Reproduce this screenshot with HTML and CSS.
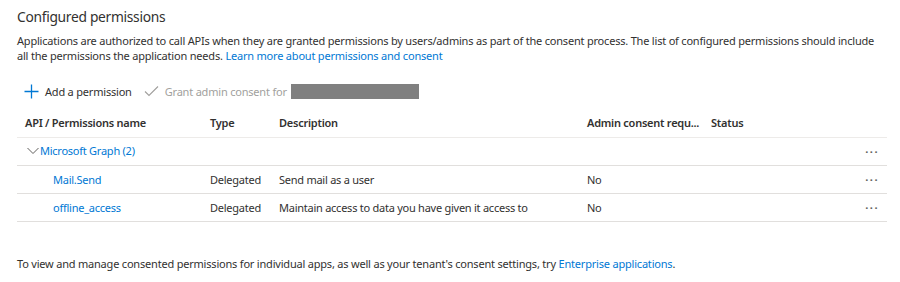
FILE: index.html
```html
<!DOCTYPE html>
<html lang="en">
<head>
    <meta charset="UTF-8">
    <title>Configured permissions</title>
    <link rel="stylesheet" href="styles.css">
</head>
<body>
    <div class="panel">
        <h2 class="title">Configured permissions</h2>
        <p class="intro">Applications are authorized to call APIs when they are granted permissions by users/admins as part of the consent process. The list of configured permissions should include all the permissions the application needs. <a href="#">Learn more about permissions and consent</a></p>

        <!-- Toolbar -->
        <div class="toolbar">
            <span class="tool">
                <svg width="15" height="15" viewBox="0 0 15 15"><path d="M7.5 0.5v14M0.5 7.5h14" stroke="#0078d4" stroke-width="1.3" fill="none"/></svg>
                Add a permission
            </span>
            <span class="tool disabled">
                <svg width="15" height="12" viewBox="0 0 15 12"><path d="M1 6.5l4 4L14 1.5" stroke="#a19f9d" stroke-width="1.1" fill="none"/></svg>
                Grant admin consent for
                <span class="redacted"></span>
            </span>
        </div>

        <!-- Permissions table -->
        <table class="perms">
            <colgroup>
                <col class="c-name"><col class="c-type"><col class="c-desc"><col class="c-admin"><col class="c-status"><col>
            </colgroup>
            <thead>
                <tr>
                    <th>API / Permissions name</th>
                    <th>Type</th>
                    <th>Description</th>
                    <th>Admin consent requ...</th>
                    <th>Status</th>
                    <th></th>
                </tr>
            </thead>
            <tbody>
                <tr class="group">
                    <td colspan="5">
                        <span class="chev"><svg width="12" height="8" viewBox="0 0 12 8"><path d="M0.5 1l5.5 5.5L11.5 1" stroke="#605e5c" stroke-width="1" fill="none"/></svg></span><a href="#">Microsoft Graph (2)</a>
                    </td>
                    <td class="more">&middot;&middot;&middot;</td>
                </tr>
                <tr>
                    <td class="perm"><a href="#">Mail.Send</a></td>
                    <td>Delegated</td>
                    <td>Send mail as a user</td>
                    <td>No</td>
                    <td></td>
                    <td class="more">&middot;&middot;&middot;</td>
                </tr>
                <tr>
                    <td class="perm"><a href="#">offline_access</a></td>
                    <td>Delegated</td>
                    <td>Maintain access to data you have given it access to</td>
                    <td>No</td>
                    <td></td>
                    <td class="more">&middot;&middot;&middot;</td>
                </tr>
            </tbody>
        </table>

        <p class="footer">To view and manage consented permissions for individual apps, as well as your tenant's consent settings, try <a href="#">Enterprise applications</a>.</p>
    </div>
</body>
</html>
```

FILE: styles.css
```css
body {
    margin: 0;
    background-color: #fff;
    color: #323130;
    font-family: "Noto Sans", "Open Sans", sans-serif;
    font-size: 11px;
    letter-spacing: -0.2px;
}
a {
    color: #0078d4;
    text-decoration: none;
}
.panel {
    padding: 6px 13px 0 17px;
}
.title {
    margin: 0;
    font-size: 13.8px;
    font-weight: 400;
    line-height: 22px;
    letter-spacing: -0.3px;
}
.intro {
    max-width: 861px;
    margin: 5px 0 0;
    line-height: 15px;
}
.toolbar {
    display: flex;
    align-items: center;
    gap: 12px;
    margin-top: 18px;
    padding-left: 7px;
    height: 20px;
}
.tool {
    display: flex;
    align-items: center;
    gap: 6px;
}
.tool.disabled {
    color: #a19f9d;
    gap: 6px;
}
.redacted {
    display: inline-block;
    width: 128px;
    height: 15px;
    background-color: #808080;
    margin-left: -2px;
}
.perms {
    width: 100%;
    margin-top: 10px;
    border-collapse: collapse;
    table-layout: fixed;
    font-size: 11px;
    letter-spacing: -0.25px;
}
.c-name { width: 185px; }
.c-type { width: 69px; }
.c-desc { width: 308px; }
.c-admin { width: 124px; }
.c-status { width: 150px; }
.perms th {
    text-align: left;
    font-weight: 600;
    height: 22px;
    padding: 0 8px 4px;
    border-bottom: 1px solid #edebe9;
    white-space: nowrap;
}
.perms td {
    height: 27px;
    padding: 0 8px;
    border-bottom: 1px solid #e1dfdd;
    white-space: nowrap;
}
.perms .group td {
    padding-left: 10px;
}
.chev {
    display: inline-block;
    vertical-align: middle;
    margin-right: 1px;
    position: relative;
    top: -2px;
}
.perms td.perm {
    padding-left: 36px;
}
.perms td.more {
    text-align: right;
    padding-right: 8px;
    font-weight: 700;
    letter-spacing: 1.5px;
    color: #605e5c;
}
.footer {
    margin: 34px 0 0;
    line-height: 15px;
}
```
